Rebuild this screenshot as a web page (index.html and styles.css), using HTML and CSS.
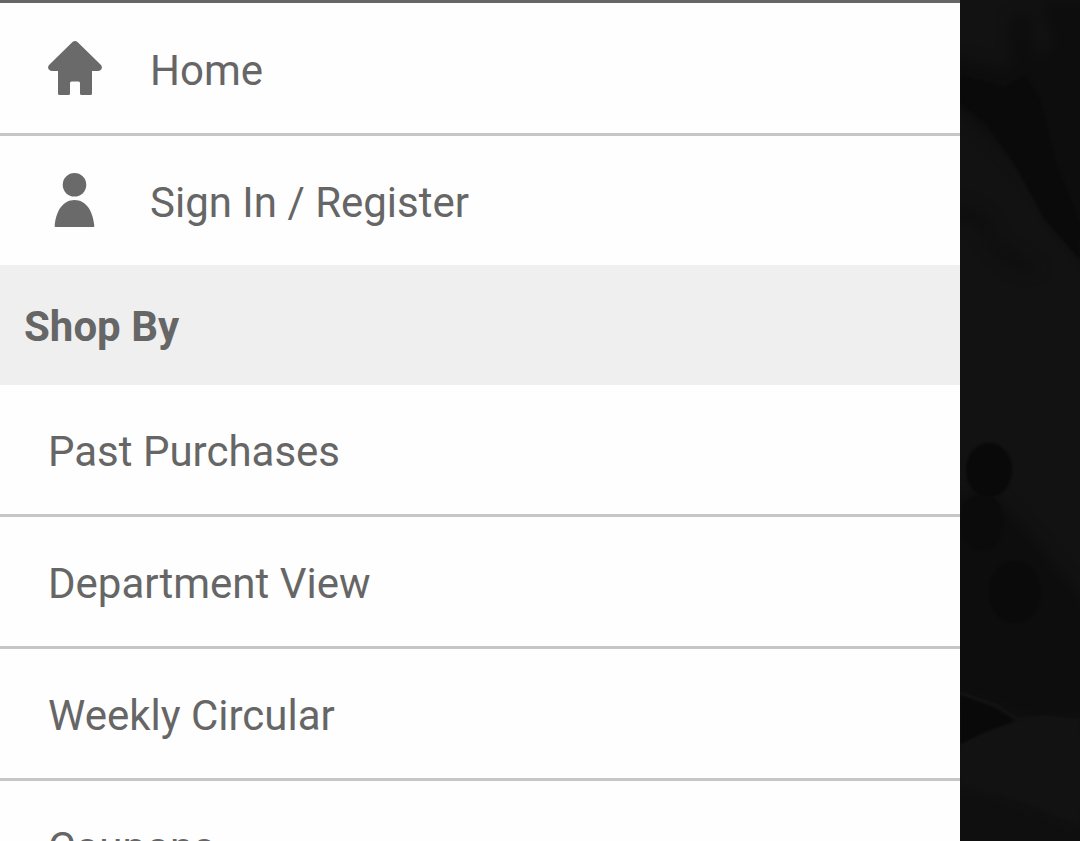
FILE: index.html
```html
<!DOCTYPE html>
<html lang="en">
<head>
<meta charset="utf-8">
<meta name="viewport" content="width=device-width, initial-scale=1">
<title>Menu</title>
<link rel="stylesheet" href="styles.css">
</head>
<body>
<div class="screen">
  <nav class="drawer" aria-label="Main menu">
    <ul class="menu menu-account">
      <li class="menu-item">
        <a class="menu-link" href="#home">
          <svg class="icon" viewBox="0 0 54 54" aria-hidden="true"><path d="M24.500 1Q27-1 29.500 1L53 24Q54.500 26 53.500 28Q52.500 30 50 30H44V52.500Q44 54 42.500 54H33.500Q32 54 32 52.500V42Q32 40.500 30.500 40.500H23.500Q22 40.500 22 42V52.500Q22 54 20.500 54H11.500Q10 54 10 52.500V30H4Q1.500 30 .5 28Q-.5 26 1 24Z"/></svg>
          <span>Home</span>
        </a>
      </li>
      <li class="menu-item">
        <a class="menu-link" href="#account">
          <svg class="icon" viewBox="0 0 54 54" aria-hidden="true"><circle cx="26.500" cy="11.800" r="11.800"/><path d="M7.500 54Q6.500 54 6.700 52.500C8 38 15 27 26.500 27S45 38 46.300 52.500Q46.500 54 45.500 54Z"/></svg>
          <span>Sign In / Register</span>
        </a>
      </li>
    </ul>
    <h2 class="section-title">Shop By</h2>
    <ul class="menu">
      <li class="menu-item"><a class="menu-link" href="#past">Past Purchases</a></li>
      <li class="menu-item"><a class="menu-link" href="#departments">Department View</a></li>
      <li class="menu-item"><a class="menu-link" href="#circular">Weekly Circular</a></li>
      <li class="menu-item"><a class="menu-link" href="#coupons">Coupons</a></li>
    </ul>
  </nav>
  <div class="backdrop">
    <svg class="scene" viewBox="0 0 120 841" preserveAspectRatio="none" aria-hidden="true">
      <defs>
        <filter id="soft" color-interpolation-filters="sRGB"><feGaussianBlur stdDeviation="1"/></filter>
        <filter id="softer" color-interpolation-filters="sRGB"><feGaussianBlur stdDeviation="7"/></filter>
      </defs>
      <g filter="url(#softer)">
        <path fill="#0d0d0d" d="M-20 55L50 70L52 15L70 15L75 60L95 45L80 0H140V270L100 220L60 165L0 110H-20Z"/>
        <path fill="#0e0e0e" d="M-20 195L25 215L38 240L60 258L80 268L62 273L35 253L15 225L-20 218Z"/>
        <path fill="#0d0d0d" d="M-20 500L30 490L75 540L140 620V718H58L35 705L-20 690Z"/>
        <path fill="#0f0f0f" d="M-20 785L60 804L140 835V860H-20Z"/>
      </g>
      <g filter="url(#soft)">
        <path fill="#0a0a0a" d="M0 75L45 88L65 75L80 100L95 160L120 225V260L85 220L55 165L28 125L0 102Z"/>
        <ellipse fill="#090909" cx="29" cy="470" rx="23" ry="27"/>
        <ellipse fill="#0b0b0b" cx="22" cy="522" rx="21" ry="28"/>
        <ellipse fill="#0a0a0a" cx="55" cy="592" rx="26" ry="31"/>
        <path fill="#121212" d="M0 744L25 732L55 721L90 718L120 721V826L60 802L0 784Z"/>
        <path fill="#090909" d="M0 695L35 708L55 721L25 732L0 744Z"/>
        <path fill="none" stroke="#151515" stroke-width="2" d="M0 693L35 705L58 719L90 717L120 721"/>
      </g>
    </svg>
  </div>
</div>
</body>
</html>
```
FILE: styles.css
```css
* {
  box-sizing: border-box;
}

body {
  margin: 0;
  font-family: Roboto, sans-serif;
  font-size: 42px;
  line-height: 48px;
  color: #666;
  background: #121212;
}

.screen {
  display: flex;
  height: 100vh;
  overflow: hidden;
}

.drawer {
  flex: 1;
  overflow: hidden;
  background: #fefefe;
  border-top: 3px solid #666;
}

.menu {
  margin: 0;
  padding: 0;
  list-style: none;
}

.menu-account {
  padding-top: 1px;
}

.menu-item + .menu-item {
  border-top: 3px solid #c6c6c6;
}

.menu-link {
  display: flex;
  align-items: center;
  gap: 48px;
  min-height: 129px;
  padding: 4px 48px 0;
  color: inherit;
  text-decoration: none;
}

.icon {
  flex: none;
  width: 54px;
  height: 54px;
  margin-bottom: 6px;
  fill: #6a6a6a;
}

.section-title {
  margin: 0;
  padding: 38px 24px 34px;
  font-size: 42px;
  font-weight: 700;
  background: #efefef;
}

.backdrop {
  flex: 0 0 120px;
  background: #121212;
}

.scene {
  display: block;
  width: 100%;
  height: 100%;
}
```
